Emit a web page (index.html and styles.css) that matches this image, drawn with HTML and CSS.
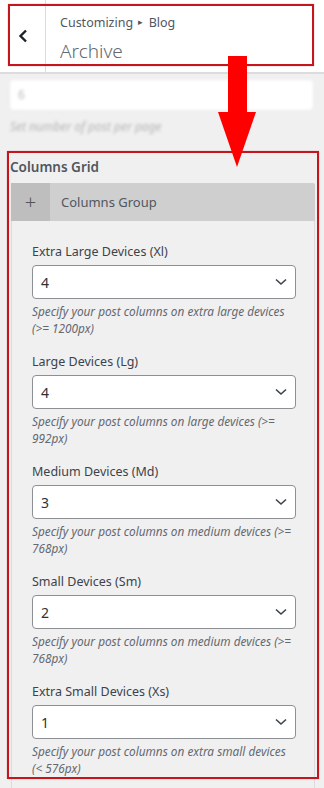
FILE: index.html
```html
<!DOCTYPE html>
<html lang="en">
<head>
    <meta charset="UTF-8">
    <meta name="viewport" content="width=device-width, initial-scale=1.0">
    <title>Customizing Blog - Archive</title>
    <link rel="stylesheet" href="styles.css">
</head>
<body>
    <div class="page">
        <!-- customizer header -->
        <div class="header">
            <div class="back">
                <svg width="10" height="14" viewBox="0 0 10 14"><path d="M8 1.5 L2.5 7 L8 12.5" fill="none" stroke="#1d2327" stroke-width="2.4"/></svg>
            </div>
            <div class="title">
                <span class="crumbs">Customizing <i class="tri">&#9656;</i> Blog</span>
                <span class="name">Archive</span>
            </div>
        </div>

        <!-- previous control, blurred -->
        <div class="blurred">
            <div class="fake-input">6</div>
            <div class="fake-desc">Set number of post per page</div>
        </div>

        <!-- columns grid -->
        <div class="grid-section">
            <div class="section-title">Columns Grid</div>
            <div class="group-head">
                <span class="plus">+</span>
                <span class="group-name">Columns Group</span>
            </div>
            <div class="group-body">
                <div class="field">
                    <label>Extra Large Devices (Xl)</label>
                    <div class="select"><span>4</span><svg width="12" height="8" viewBox="0 0 12 8"><path d="M1 1.5 L6 6 L11 1.5" fill="none" stroke="#3c434a" stroke-width="1.6"/></svg></div>
                    <p class="desc">Specify your post columns on extra large devices (&gt;= 1200px)</p>
                </div>
                <div class="field">
                    <label>Large Devices (Lg)</label>
                    <div class="select"><span>4</span><svg width="12" height="8" viewBox="0 0 12 8"><path d="M1 1.5 L6 6 L11 1.5" fill="none" stroke="#3c434a" stroke-width="1.6"/></svg></div>
                    <p class="desc">Specify your post columns on large devices (&gt;= 992px)</p>
                </div>
                <div class="field">
                    <label>Medium Devices (Md)</label>
                    <div class="select"><span>3</span><svg width="12" height="8" viewBox="0 0 12 8"><path d="M1 1.5 L6 6 L11 1.5" fill="none" stroke="#3c434a" stroke-width="1.6"/></svg></div>
                    <p class="desc">Specify your post columns on medium devices (&gt;= 768px)</p>
                </div>
                <div class="field">
                    <label>Small Devices (Sm)</label>
                    <div class="select"><span>2</span><svg width="12" height="8" viewBox="0 0 12 8"><path d="M1 1.5 L6 6 L11 1.5" fill="none" stroke="#3c434a" stroke-width="1.6"/></svg></div>
                    <p class="desc">Specify your post columns on medium devices (&gt;= 768px)</p>
                </div>
                <div class="field">
                    <label>Extra Small Devices (Xs)</label>
                    <div class="select"><span>1</span><svg width="12" height="8" viewBox="0 0 12 8"><path d="M1 1.5 L6 6 L11 1.5" fill="none" stroke="#3c434a" stroke-width="1.6"/></svg></div>
                    <p class="desc">Specify your post columns on extra small devices (&lt;&nbsp;576px)</p>
                </div>
            </div>
        </div>

        <!-- annotations drawn over the screenshot -->
        <div class="mark mark-header"></div>
        <div class="mark mark-grid"></div>
        <div class="arrow">
            <div class="arrow-stem"></div>
            <div class="arrow-head"></div>
        </div>
    </div>
</body>
</html>
```

FILE: styles.css
```css
body {
    margin: 0;
    background-color: #f0f0f1;
    font-family: "Noto Sans", "Open Sans", sans-serif;
    color: #50575e;
}
.page {
    position: relative;
    width: 324px;
    min-height: 788px;
    overflow: hidden;
}
/* header */
.header {
    display: flex;
    height: 72px;
    background-color: #fff;
    border-bottom: 2px solid #dcdcde;
}
.back {
    display: flex;
    align-items: center;
    justify-content: center;
    width: 45px;
    border-right: 1px solid #dcdcde;
}
.title {
    display: flex;
    flex-direction: column;
    padding: 12px 0 0 14px;
}
.crumbs {
    font-size: 12.5px;
    line-height: 20px;
    color: #50575e;
}
.crumbs .tri {
    font-style: normal;
    font-size: 9px;
    vertical-align: 2px;
    margin: 0 2px;
}
.name {
    margin-top: 5px;
    font-size: 19px;
    line-height: 26px;
    font-weight: 300;
    color: #646970;
}
/* blurred control */
.blurred {
    padding: 6px 11px 0 10px;
    filter: blur(1.4px);
}
.fake-input {
    height: 30px;
    padding-left: 8px;
    background-color: #fff;
    border-radius: 4px;
    box-shadow: 0 0 2px rgba(0, 0, 0, .08);
    font-size: 12px;
    line-height: 30px;
    color: #bbb;
}
.fake-desc {
    margin-top: 8px;
    font-size: 12px;
    font-style: italic;
    color: #b5b5b5;
}
/* columns grid */
.grid-section {
    padding: 22px 9px 0 10px;
}
.section-title {
    font-size: 13.5px;
    font-weight: 600;
    line-height: 20px;
    color: #50575e;
}
.group-head {
    display: flex;
    align-items: center;
    height: 38px;
    margin: 6px 0 0 1px;
    background-color: #cfcfcf;
    border-radius: 2px 2px 0 0;
}
.plus {
    width: 39px;
    height: 100%;
    background-color: #bebebe;
    text-align: center;
    font-size: 20px;
    font-weight: 300;
    line-height: 37px;
    color: #555;
}
.group-name {
    padding-left: 11px;
    font-size: 13px;
    color: #50575e;
}
.group-body {
    margin-left: 1px;
    padding: 21px 18px 0 20px;
    border-left: 1px solid #dcdcde;
    border-right: 1px solid #dcdcde;
    min-height: 580px;
}
.field {
    margin-bottom: 15px;
}
.field label {
    display: block;
    font-size: 12.5px;
    line-height: 20px;
    color: #3c434a;
}
.select {
    display: flex;
    align-items: center;
    justify-content: space-between;
    height: 32px;
    margin-top: 3px;
    padding: 0 8px;
    background-color: #fff;
    border: 1px solid #8c8f94;
    border-radius: 4px;
    font-size: 14px;
    color: #2c3338;
}
.desc {
    margin: 4px 0 0;
    font-size: 11.8px;
    line-height: 17px;
    font-style: italic;
    color: #646970;
}
/* red annotations */
.mark {
    position: absolute;
    border: 2px solid #c4161c;
    box-shadow: 0 0 1px rgba(196, 22, 28, .5);
}
.mark-header {
    left: 8px;
    top: 4px;
    width: 302px;
    height: 58px;
}
.mark-grid {
    left: 7px;
    top: 151px;
    width: 308px;
    height: 624px;
}
.arrow {
    position: absolute;
    left: 218px;
    top: 56px;
    width: 38px;
}
.arrow-stem {
    width: 19px;
    height: 56px;
    margin-left: 10px;
    background-color: #f00;
}
.arrow-head {
    width: 0;
    height: 0;
    border-left: 19px solid transparent;
    border-right: 19px solid transparent;
    border-top: 55px solid #f00;
}
```
